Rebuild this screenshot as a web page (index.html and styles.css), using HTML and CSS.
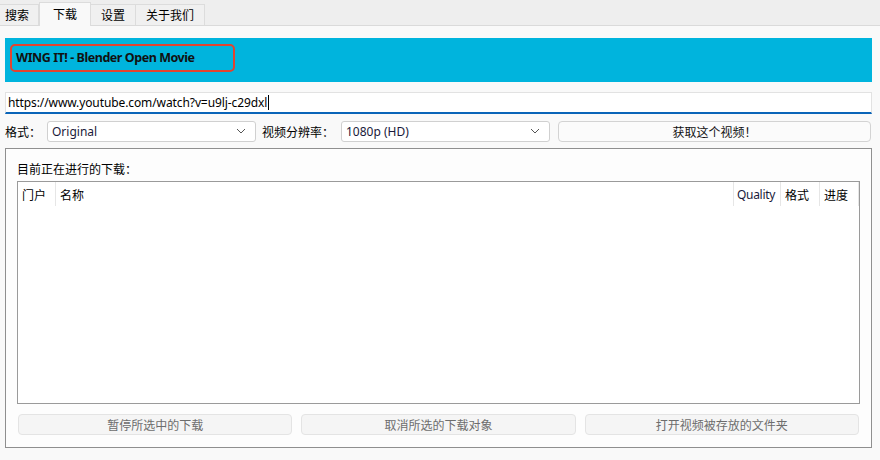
FILE: index.html
```html
<!DOCTYPE html>
<html lang="zh-CN">
<head>
<meta charset="utf-8">
<title>下载</title>
<link rel="stylesheet" href="styles.css">
</head>
<body>
<div class="tabs">
  <div class="tab first">搜索</div>
  <div class="tab active">下载</div>
  <div class="tab">设置</div>
  <div class="tab">关于我们</div>
</div>
<div class="page">
  <div class="banner">
    <div class="title">WING IT! - Blender Open Movie</div>
  </div>
  <div class="url"><span class="urltext">https://www.youtube.com/watch?v=u9lj-c29dxl</span><span class="caret"></span></div>
  <div class="row">
    <span class="lbl lbl1">格式：</span>
    <div class="select"><span>Original</span><svg class="chev" width="10" height="6" viewBox="0 0 10 6"><path d="M1 1 L5 5 L9 1" fill="none" stroke="#555" stroke-width="1"/></svg></div>
    <span class="lbl lbl2">视频分辨率：</span>
    <div class="select"><span>1080p (HD)</span><svg class="chev" width="10" height="6" viewBox="0 0 10 6"><path d="M1 1 L5 5 L9 1" fill="none" stroke="#555" stroke-width="1"/></svg></div>
    <button class="fetch">获取这个视频！</button>
  </div>
  <div class="group">
    <div class="glabel">目前正在进行的下载：</div>
    <div class="list">
      <div class="lhead">
        <div class="hc">门户</div>
        <div class="hc">名称</div>
        <div class="hc">Quality</div>
        <div class="hc">格式</div>
        <div class="hc">进度</div>
      </div>
    </div>
    <div class="actions">
      <button class="act">暂停所选中的下载</button>
      <button class="act">取消所选的下载对象</button>
      <button class="act">打开视频被存放的文件夹</button>
    </div>
  </div>
</div>
</body>
</html>
```
FILE: styles.css
```css
* { box-sizing: border-box; }
html, body { margin: 0; padding: 0; }
body {
  width: 880px;
  height: 460px;
  overflow: hidden;
  background: #f6f6f6;
  font-family: "Noto Sans", "Noto Sans CJK SC", sans-serif;
  font-size: 12px;
  color: #000;
}
.tabs {
  display: flex;
  align-items: flex-end;
  height: 26px;
  background: #eeeeee;
  border-bottom: 1px solid #dadada;
}
.tab {
  height: 21px;
  line-height: 20px;
  padding: 0 10px;
  border: 1px solid #dcdcdc;
  border-bottom: none;
  border-left: none;
  background: #f0f0f0;
  font-family: "Noto Sans CJK SC", sans-serif;
  font-size: 12px;
}
.tab.first { padding: 0 9px 0 5px; }
.tab.active {
  height: 24px;
  line-height: 22px;
  padding: 0 13px;
  background: #f9f9f9;
  border-left: 1px solid #dcdcdc;
  margin-bottom: -1px;
}
.page {
  background: #f9f9f9;
  padding: 12px 8px 0 5px;
  height: 434px;
}
.banner {
  height: 44px;
  background: #00b4dd;
  padding: 6px 0 0 5px;
}
.title {
  width: 225px;
  height: 28px;
  border: 2px solid #e2432f;
  border-radius: 5px;
  font-weight: bold;
  font-size: 12.5px;
  line-height: 24px;
  padding-left: 4px;
  color: #111;
  letter-spacing: -0.45px;
}
.url {
  margin-top: 10px;
  height: 22px;
  background: #fff;
  border: 1px solid #e2e2e2;
  border-bottom: 2px solid #0a64b8;
  padding-left: 2px;
  display: flex;
  align-items: center;
  font-size: 12px;
}
.urltext { letter-spacing: -0.1px; }
.caret {
  display: inline-block;
  width: 1px;
  height: 15px;
  background: #000;
  margin-left: 1px;
}
.row {
  display: flex;
  align-items: center;
  margin-top: 6px;
  height: 22px;
}
.lbl { font-family: "Noto Sans CJK SC", sans-serif; }
.lbl1 { width: 42px; }
.lbl2 { width: 85px; padding-left: 6px; }
.select {
  width: 209px;
  height: 21px;
  background: #fff;
  border: 1px solid #d0d0d0;
  border-radius: 3px;
  display: flex;
  align-items: center;
  justify-content: space-between;
  padding: 0 9px 0 4px;
  color: #1a1a3a;
}
.fetch {
  margin-left: 8px;
  width: 313px;
  height: 21px;
  background: #fbfbfb;
  border: 1px solid #d3d3d3;
  border-radius: 4px;
  font-family: "Noto Sans CJK SC", sans-serif;
  font-size: 12px;
  color: #111;
  padding: 0;
}
.group {
  margin-top: 6px;
  width: 867px;
  height: 300px;
  border: 1px solid #8f8f8f;
  background: #fdfdfd;
  padding: 12px 11px 0 11px;
}
.glabel {
  height: 20px;
  line-height: 16px;
  font-family: "Noto Sans CJK SC", sans-serif;
}
.list {
  height: 223px;
  border: 1px solid #9a9a9a;
  background: #fff;
}
.lhead {
  display: grid;
  grid-template-columns: 38px 1fr 47px 39px 39px;
  height: 24px;
}
.hc {
  border-right: 1px solid #e6e6e6;
  padding-left: 4px;
  line-height: 25px;
  font-family: "Noto Sans CJK SC", sans-serif;
  white-space: nowrap;
  overflow: hidden;
}
.hc:nth-child(3) { font-family: "Noto Sans", sans-serif; letter-spacing: -0.3px; color: #1a1a3a; padding-left: 3px; }
.actions {
  display: flex;
  gap: 9px;
  margin-top: 10px;
  padding-left: 1px;
  padding-right: 1px;
}
.act {
  flex: 1;
  height: 21px;
  background: #f5f5f5;
  border: 1px solid #e4e4e4;
  border-radius: 4px;
  color: #6d6d6d;
  font-family: "Noto Sans CJK SC", sans-serif;
  font-size: 12px;
  padding: 0;
}
```
